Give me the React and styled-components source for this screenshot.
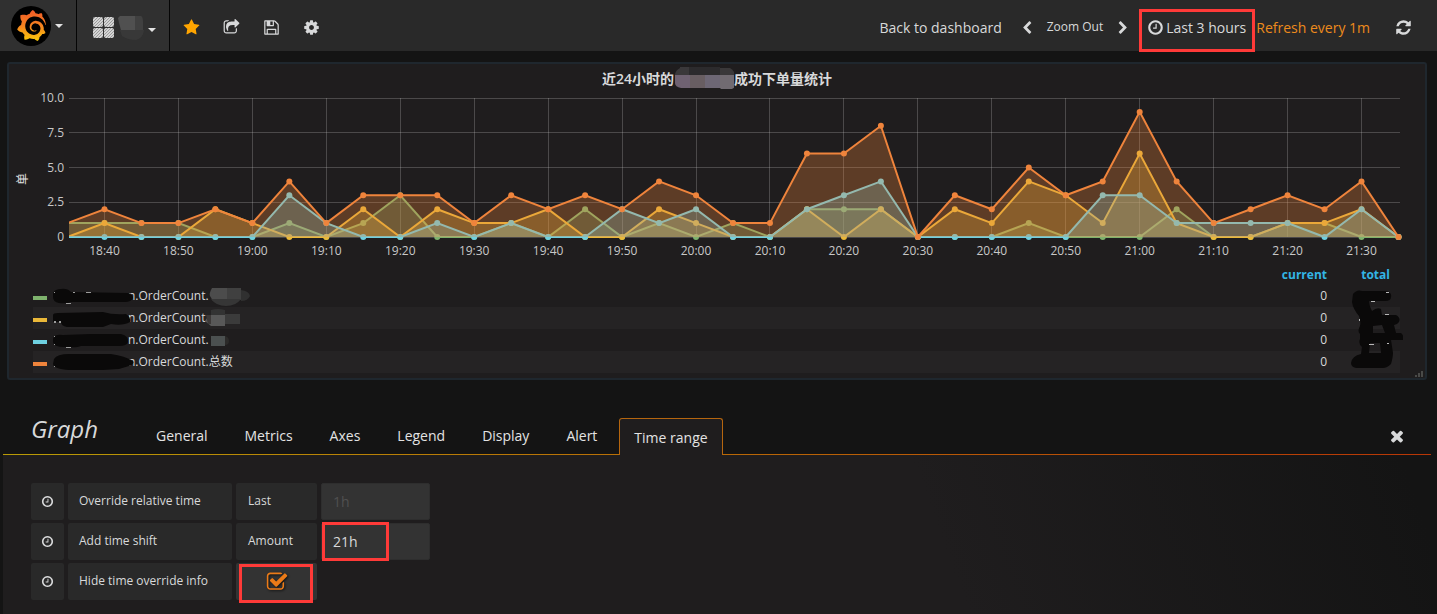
import React, { useLayoutEffect, useRef, useState } from "react";
import styled, { createGlobalStyle, css } from "styled-components";
import { SiGrafana } from "react-icons/si";

const GlobalStyle = createGlobalStyle`
  * { box-sizing: border-box; }
  body {
    margin: 0;
    background: #141414;
    color: #d8d9da;
    font-family: "Open Sans", "Noto Sans CJK SC", sans-serif;
    font-size: 14px;
    line-height: 20px;
  }
  button, input { font: inherit; color: inherit; }
  button { background: none; border: 0; padding: 0; cursor: pointer; }
  a { color: inherit; text-decoration: none; }
`;

const ICONS = {
  star: "M1728 647q0 22-26 48l-363 354 86 500q1 7 1 20 0 21-10.500 35.500t-30.500 14.500q-19 0-40-12l-449-236-449 236q-22 12-40 12-21 0-31.500-14.500t-10.500-35.500q0-6 2-20l86-500-364-354q-25-27-25-48 0-37 56-46l502-73 225-455q19-41 49-41t49 41l225 455 502 73q56 9 56 46z",
  share: "M1472 989v259q0 119-84.500 203.500t-203.500 84.500h-832q-119 0-203.500-84.500t-84.500-203.500v-832q0-119 84.500-203.500t203.500-84.500h255q13 0 22.500 9.500t9.500 22.500q0 27-26 32-77 26-133 60-10 4-16 4h-112q-66 0-113 47t-47 113v832q0 66 47 113t113 47h832q66 0 113-47t47-113v-214q0-19 18-29 28-13 54-37 16-16 35-8 21 9 21 29zm237-496l-384 384q-18 19-45 19-12 0-25-5-39-17-39-59v-192h-160q-323 0-438 131-119 137-74 473 3 23-20 34-8 2-12 2-16 0-26-13-10-14-21-31t-39.500-68.500-49.500-99.500-38.500-114-17.500-122q0-49 3.500-91t14-90 28-88 47-81.500 68.500-74 94.500-61.500 124.500-48.500 159.500-30.500 196.500-11h160v-192q0-42 39-59 13-5 25-5 26 0 45 19l384 384q19 19 19 45t-19 45z",
  save: "M512 1536h768v-384h-768v384zm896 0h128v-896q0-14-10-38.500t-20-34.500l-281-281q-10-10-34-20t-39-10v416q0 40-28 68t-68 28h-576q-40 0-68-28t-28-68v-416h-128v1280h128v-416q0-40 28-68t68-28h832q40 0 68 28t28 68v416zm-384-928v-320q0-13-9.500-22.500t-22.500-9.500h-192q-13 0-22.500 9.500t-9.500 22.500v320q0 13 9.500 22.500t22.500 9.500h192q13 0 22.500-9.500t9.500-22.500zm640 32v928q0 40-28 68t-68 28h-1344q-40 0-68-28t-28-68v-1344q0-40 28-68t68-28h928q40 0 88 20t76 48l280 280q28 28 48 76t20 88z",
  cog: "M1152 896q0-106-75-181t-181-75-181 75-75 181 75 181 181 75 181-75 75-181zm512-109v222q0 12-8 23t-20 13l-185 28q-19 54-39 91 35 50 107 138 10 12 10 25t-9 23q-27 37-99 108t-94 71q-12 0-26-9l-138-108q-44 23-91 38-16 136-29 186-7 28-36 28h-222q-14 0-24.500-8.500t-11.500-21.500l-28-184q-49-16-90-37l-141 107q-10 9-25 9-14 0-25-11-126-114-165-168-7-10-7-23 0-12 8-23 15-21 51-66.500t54-70.500q-27-50-41-99l-183-27q-13-2-21-12.500t-8-23.500v-222q0-12 8-23t19-13l186-28q14-46 39-92-40-57-107-138-10-12-10-24 0-10 9-23 26-36 98.500-107.500t94.500-71.500q13 0 26 10l138 107q44-23 91-38 16-136 29-186 7-28 36-28h222q14 0 24.500 8.500t11.500 21.500l28 184q49 16 90 37l142-107q9-9 24-9 13 0 25 10 129 119 165 170 7 8 7 22 0 12-8 23-15 21-51 66.500t-54 70.500q26 50 41 98l183 28q13 2 21 12.500t8 23.500z",
  left: "M1427 301l-531 531 531 531q19 19 19 45t-19 45l-166 166q-19 19-45 19t-45-19l-742-742q-19-19-19-45t19-45l742-742q19-19 45-19t45 19l166 166q19 19 19 45t-19 45z",
  right: "M1363 877l-742 742q-19 19-45 19t-45-19l-166-166q-19-19-19-45t19-45l531-531-531-531q-19-19-19-45t19-45l166-166q19-19 45-19t45 19l742 742q19 19 19 45t-19 45z",
  clock: "M1024 544v448q0 14-9 23t-23 9h-320q-14 0-23-9t-9-23v-64q0-14 9-23t23-9h224v-352q0-14 9-23t23-9h64q14 0 23 9t9 23zm416 352q0-148-73-273t-198-198-273-73-273 73-198 198-73 273 73 273 198 198 273 73 273-73 198-198 73-273zm224 0q0 209-103 385.500t-279.500 279.500-385.500 103-385.500-103-279.500-279.500-103-385.500 103-385.500 279.500-279.500 385.500-103 385.500 103 279.500 279.500 103 385.500z",
  refresh: "M1639 1056q0 5-1 7-64 268-268 434.500t-478 166.500q-146 0-282.500-55t-243.500-157l-129 129q-19 19-45 19t-45-19-19-45v-448q0-26 19-45t45-19h448q26 0 45 19t19 45-19 45l-137 137q71 66 161 102t187 36q134 0 250-65t186-179q11-17 53-117 8-23 30-23h192q13 0 22.500 9.500t9.500 22.500zm25-800v448q0 26-19 45t-45 19h-448q-26 0-45-19t-19-45 19-45l138-138q-148-137-349-137-134 0-250 65t-186 179q-11 17-53 117-8 23-30 23h-199q-13 0-22.500-9.500t-9.500-22.500v-7q65-268 270-434.500t480-166.500q146 0 284 55.500t245 156.500l130-129q19-19 45-19t45 19 19 45z",
  times: "M1490 1322q0 40-28 68l-136 136q-28 28-68 28t-68-28l-294-294-294 294q-28 28-68 28t-68-28l-136-136q-28-28-28-68t28-68l294-294-294-294q-28-28-28-68t28-68l136-136q28-28 68-28t68 28l294 294 294-294q28-28 68-28t68 28l136 136q28 28 28 68t-28 68l-294 294 294 294q28 28 28 68z",
  check: "M1472 930v318q0 119-84.500 203.500t-203.500 84.500h-832q-119 0-203.500-84.500t-84.500-203.500v-832q0-119 84.500-203.500t203.500-84.500h832q63 0 117 25 15 7 18 23 3 17-9 29l-49 49q-10 10-23 10-3 0-9-2-23-6-45-6h-832q-66 0-113 47t-47 113v832q0 66 47 113t113 47h832q66 0 113-47t47-113v-254q0-13 9-22l64-64q10-10 23-10 6 0 12 3 20 8 20 29zm231-489l-814 814q-24 24-57 24t-57-24l-430-430q-24-24-24-57t24-57l110-110q24-24 57-24t57 24l263 263 647-647q24-24 57-24t57 24l110 110q24 24 24 57t-24 57z",
};

const IconSvg = styled.svg`
  display: block;
  flex: none;
  fill: currentColor;
`;

const Icon = ({ name, size = 16 }) => (
  <IconSvg width={size} height={size} viewBox="0 0 1792 1792" aria-hidden="true">
    <path d={ICONS[name]} />
  </IconSvg>
);

/* ---------- top bar ---------- */

const Navbar = styled.header`
  display: flex;
  height: 51px;
  background: #292929;
`;

const NavSection = styled.button`
  position: relative;
  display: flex;
  align-items: center;
  gap: 4px;
  width: ${(p) => p.$width}px;
  padding-left: ${(p) => p.$inset}px;
  background: #303030;
  border-right: 1px solid #050505;
`;

const LogoDisc = styled.span`
  display: grid;
  place-items: center;
  width: 40px;
  height: 40px;
  border-radius: 50%;
  background: #000;
  svg { fill: url(#flame); }
`;

const Defs = styled.svg`
  position: absolute;
`;

const Caret = styled.span`
  border: 4px solid transparent;
  border-top-color: #e3e3e3;
  border-bottom: 0;
  ${(p) => p.$low && css`margin-top: 8px;`}
`;

const NavActions = styled.nav`
  display: flex;
  align-items: center;
  gap: 23px;
  padding: 3px 0 0 13px;
`;

const NavIcon = styled.button`
  color: ${(p) => (p.$starred ? "#ffa500" : "#d8d9da")};
`;

const TimeControls = styled.div`
  display: flex;
  align-items: center;
  margin-left: auto;
  padding: 4px 25px 0 0;
`;

const NavLink = styled.a`
  margin-right: 18px;
`;

const ZoomButton = styled.button`
  margin: 0 13px 2px;
  font-size: 12px;
`;

const TimePicker = styled.button`
  position: relative;
  display: flex;
  align-items: center;
  gap: 2px;
  margin: 0 10px 0 17px;
`;

const RefreshRate = styled.button`
  margin-right: 25px;
  color: #ed8b1c;
`;

const Callout = styled.span`
  position: absolute;
  inset: ${(p) => p.$inset};
  border: 3px solid #ff3a38;
  pointer-events: none;
`;

/* ---------- panel ---------- */

const Panel = styled.section`
  position: relative;
  margin: 11px 10px 0 7px;
  padding-bottom: 5px;
  border: 2px solid #1f272e;
  border-radius: 3px;
  background: #1f1d1e;
`;

const PanelTitle = styled.h2`
  display: flex;
  justify-content: center;
  margin: 0;
  height: 28px;
  padding-top: 5px;
  font-size: 14px;
  font-weight: 600;
  svg { margin: -2px 0 0 1px; }
`;

const ChartBox = styled.div`
  height: 172px;
  svg { display: block; overflow: visible; }
`;

const LegendTable = styled.table`
  width: calc(100% - 49px);
  margin-left: 24px;
  border-collapse: collapse;
  font-size: 12px;
  line-height: 22px;
  th, td { padding: 0; height: 22px; text-align: right; }
  thead th, thead td { height: 21px; line-height: 21px; color: #33b5e5; font-weight: 700; }
  tbody tr:nth-child(even) { background: #252324; }
  th:last-child, td:last-child { width: 73px; padding-right: 10px; }
`;

const SeriesCell = styled.td`
  && { text-align: left; }
`;

const SeriesName = styled.div`
  display: flex;
  align-items: center;
  height: 22px;
`;

const Swatch = styled.span`
  width: 14px;
  height: 4px;
  margin: 3px 6px 0 0;
  background: ${(p) => p.$color};
`;

const ScribbleOver = styled.span`
  position: relative;
  z-index: 1;
  height: 22px;
`;

const MaskedTotal = styled.div`
  position: absolute;
  right: 22px;
  bottom: 9px;
  svg { display: block; }
`;

const ResizeHandle = styled.svg`
  position: absolute;
  right: 1px;
  bottom: 1px;
`;

const SERIES = [
  { color: "#7EB26D", values: [1,1,1,1,0,0,1,0,1,3,0,0,1,0,2,0,1,0,1,0,2,2,2,0,0,0,1,0,0,0,2,0,0,1,1,0,0] },
  { color: "#EAB839", values: [0,1,0,0,2,1,0,0,2,0,2,1,1,2,0,0,2,1,0,0,2,0,2,0,2,1,4,3,1,6,1,0,0,1,1,2,0] },
  { color: "#6ED0E0", values: [0,0,0,0,0,0,3,1,0,0,1,0,1,0,0,2,1,2,0,0,2,3,4,0,0,0,0,0,3,3,1,1,1,1,0,2,0] },
  { color: "#EF843C", values: [1,2,1,1,2,1,4,1,3,3,3,1,3,2,3,2,4,3,1,1,6,6,8,0,3,2,5,3,4,9,4,1,2,3,2,4,0] },
];

const Y_TICKS = [["10.0", 10], ["7.5", 7.5], ["5.0", 5], ["2.5", 2.5], ["0", 0]];

const timeLabel = (i) => {
  const minutes = 18 * 60 + 35 + i * 5;
  return `${Math.floor(minutes / 60)}:${String(minutes % 60).padStart(2, "0")}`;
};

function Chart() {
  const box = useRef(null);
  const [width, setWidth] = useState(1200);

  useLayoutEffect(() => {
    const measure = () => setWidth(box.current.clientWidth);
    measure();
    const observer = new ResizeObserver(measure);
    observer.observe(box.current);
    return () => observer.disconnect();
  }, []);

  const left = 60;
  const right = width - 25;
  const top = 6;
  const bottom = 145;
  const x = (i) => left - 1.5 + (i * (right - left)) / 36;
  const y = (v) => bottom - (v * (bottom - top)) / 10;

  return (
    <ChartBox ref={box}>
      <svg width={width} height="172" fontSize="12" fill="#c8c8c8">
        <clipPath id="plot">
          <rect x={left} y="0" width={right - left + 6} height="160" />
        </clipPath>
        <g stroke="rgba(200,200,200,.26)">
          {Y_TICKS.map(([label, v]) => (
            <line key={label} x1={left} x2={right} y1={Math.floor(y(v)) + 0.5} y2={Math.floor(y(v)) + 0.5} />
          ))}
          {SERIES[0].values.map((_, i) =>
            i % 2 ? <line key={i} x1={Math.floor(x(i)) + 0.5} x2={Math.floor(x(i)) + 0.5} y1={top} y2={bottom} /> : null
          )}
        </g>
        {Y_TICKS.map(([label, v]) => (
          <text key={label} x={left - 5} y={y(v) + 4} textAnchor="end">{label}</text>
        ))}
        {SERIES[0].values.map((_, i) =>
          i % 2 ? <text key={i} x={x(i)} y="163" textAnchor="middle">{timeLabel(i)}</text> : null
        )}
        <text transform="translate(18 87) rotate(-90)" textAnchor="middle" fill="#e2e2e2">单</text>
        {SERIES.map(({ color, values }) => {
          const line = values.map((v, i) => `${x(i)},${y(v)}`).join(" ");
          return (
            <g key={color} clipPath="url(#plot)">
              <polygon points={`${x(0)},${bottom} ${line} ${x(36)},${bottom}`} fill={color} fillOpacity=".3" />
              <polyline points={line} fill="none" stroke={color} strokeWidth="2" />
              {values.map((v, i) => (i ? <circle key={i} cx={x(i)} cy={y(v)} r="3" fill={color} /> : null))}
            </g>
          );
        })}
      </svg>
    </ChartBox>
  );
}

const TitleMask = () => (
  <svg width="59" height="24" aria-hidden="true">
    <path d="M5 0H14V9H0V7Q1 3 5 1z" fill="#3a383a" />
    <path d="M14 0h31v9H14z" fill="#2c2b2d" />
    <path d="M45 1h10q4 2 5 7H45z" fill="#3a3839" />
    <path d="M0 8h15v13H6Q0 20 0 16z" fill="#6f6272" />
    <path d="M15 8h15v13H15z" fill="#685e62" />
    <path d="M30 8h15v13H30z" fill="#6d6775" />
    <path d="M45 8h15v12l-3 2H46l-1-1z" fill="#716b71" />
  </svg>
);

const LEGEND = [
  {
    color: "#7EB26D",
    scribble: "M0 8Q2 4 8 4Q14 3 18 7L75 8Q80 9 80 13Q78 17 72 17H18Q14 19 6 18Q0 17 0 12z",
    specks: "M1 7h1v1h-1zM20 7h2v1h-2zM33 7h5v1h-5zM13 18h5v1h-5z",
    mosaic: [["M3 3Q0 8 1 11L4 16H18V3z", "#4c4c4c"], ["M18 3h14v12H18z", "#404040"], ["M32 5q8 1 9 6q-2 5-9 5z", "#303030"], ["M2 14h30q-5 7-15 7T2 14z", "#363636"]],
  },
  {
    color: "#EAB839",
    scribble: "M0 8Q0 6 5 6L50 5Q60 8 73 7Q78 10 77 15Q70 19 58 17L50 20H14Q8 19 8 15H0z",
    specks: "M1 14h2v2h-2zM6 14h2v2h-2z",
    mosaic: [["M2 3q7-2 14 0v6H2z", "#333"], ["M0 8h16v11H2L-4 14z", "#585858"], ["M16 7h15v10H16z", "#3b3b3b"], ["M-3 8h5v9h-3z", "#3d3938"]],
  },
  {
    color: "#6ED0E0",
    scribble: "M0 10Q1 5 10 6L38 5H68Q76 7 75 13Q74 17 66 17H28Q24 19 12 18Q0 18 0 13z",
    specks: "M1 7h1v1h-1zM1 15h1v1h-1zM13 18h5v1h-5z",
    mosaic: [["M2 7h14v10H2z", "#4b5050"], ["M16 7q4 1 4 5t-4 4z", "#2b2a29"]],
  },
  {
    color: "#EF843C",
    scribble: "M1 8Q4 3 16 3H58Q72 5 80 10Q82 13 76 15L66 18L50 19H16Q1 18 0 13z",
    specks: "M1 15h1v1h-1z",
    suffix: "总数",
  },
];

const Scribble = ({ d, specks }) => (
  <svg width="75" height="22" overflow="visible" aria-hidden="true">
    <path d={d} fill="#0a0909" />
    <path d={specks} fill="#9c9c9c" />
  </svg>
);

/* ---------- editor ---------- */

const Editor = styled.section`
  margin: 33px 6px 0 3px;
`;

const TabBar = styled.div`
  display: flex;
  align-items: flex-end;
  padding: 0 25px 0 28px;
  border-bottom: 1px solid #b8700a;
  border-image: linear-gradient(to right, #b89b06, #b83606) 1;
`;

const EditorTitle = styled.h1`
  width: 110px;
  margin: 0 0 9px;
  font-size: 24px;
  line-height: 32px;
  font-weight: 400;
  font-style: italic;
`;

const Tab = styled.button`
  height: 37px;
  margin: 0 7px -1px 0;
  padding: 0 14px 2px;
  border: 1px solid transparent;
  border-bottom: 0;
  color: #e3e3e3;
  ${(p) => p.$active && css`
    padding: 2px 14px 0;
    border-color: #b5660f;
    border-radius: 3px 3px 0 0;
    background: #1f1d1e;
  `}
`;

const CloseButton = styled.button`
  margin: 0 0 9px auto;
`;

const EditorBody = styled.form`
  display: flex;
  flex-direction: column;
  gap: 3px;
  padding: 28px 28px 14px;
  background: linear-gradient(70deg, #1f1d1e 0%, #1f1d1e 65%, #141414 98%);
`;

const Field = styled.div`
  display: flex;
  gap: 4px;
  height: 37px;
  font-size: 12px;
`;

const FieldIcon = styled.span`
  display: grid;
  place-items: center;
  width: 33px;
  border-radius: 2px;
  background: #292929;
`;

const FieldLabel = styled.label`
  display: flex;
  align-items: center;
  width: ${(p) => p.$width}px;
  padding: 0 11px 2px;
  border-radius: 2px;
  background: #292929;
`;

const FieldUnit = styled.span`
  display: flex;
  align-items: center;
  width: 81px;
  padding: 0 12px 2px;
  border-radius: 2px;
  background: #292929;
`;

const InputBox = styled.span`
  position: relative;
  width: 109px;
`;

const TextInput = styled.input`
  width: 100%;
  height: 37px;
  padding: 0 11px;
  border: 1px solid #2e2e2e;
  border-radius: 2px;
  background: #333;
  font-size: 14px;
  &::placeholder { color: #505050; opacity: 1; }
`;

const CheckCell = styled.label`
  position: relative;
  display: grid;
  place-items: center;
  width: 81px;
  border-radius: 2px;
  background: #333;
  color: #eb7b18;
  svg { filter: drop-shadow(1px 1px 1px #111); }
`;

const HiddenCheck = styled.input`
  position: absolute;
  opacity: 0;
`;

const TABS = ["General", "Metrics", "Axes", "Legend", "Display", "Alert", "Time range"];

export default function App() {
  return (
    <>
      <GlobalStyle />
      <Navbar>
        <NavSection $width={77} $inset={11} aria-label="Main menu">
          <Defs width="0" height="0" aria-hidden="true">
            <linearGradient id="flame" x1="0" y1="0" x2="0" y2="1">
              <stop offset="0" stopColor="#f05a28" />
              <stop offset=".5" stopColor="#f58220" />
              <stop offset="1" stopColor="#fbca0a" />
            </linearGradient>
          </Defs>
          <LogoDisc>
            <SiGrafana size={31} />
          </LogoDisc>
          <Caret />
        </NavSection>
        <NavSection $width={93} $inset={16} aria-label="Dashboards">
          <svg width="51" height="28" viewBox="0 -1 51 28" aria-hidden="true">
            <defs>
              <pattern id="hatch" width="3" height="3" patternUnits="userSpaceOnUse">
                <rect width="3" height="3" fill="#d4d4d4" />
                <path d="M0 3L3 0" stroke="#9a9a9a" strokeWidth="1" />
              </pattern>
            </defs>
            <g fill="url(#hatch)">
              <rect x="0" y="4" width="10" height="10" rx="2" />
              <rect x="11" y="4" width="10" height="10" rx="2" />
              <rect x="0" y="15" width="10" height="10" rx="2" />
              <rect x="11" y="15" width="10" height="10" rx="2" />
            </g>
            <path d="M27 3h15v14H28l-2-7-1-5z" fill="#505050" />
            <path d="M42 3h6q2 1 2 6v8h-8z" fill="#404040" />
            <path d="M27 17h24q-1 8-8 10-8 0-14-4z" fill="#383838" />
          </svg>
          <Caret $low />
        </NavSection>
        <NavActions>
          <NavIcon $starred aria-label="Star"><Icon name="star" size={17} /></NavIcon>
          <NavIcon aria-label="Share"><Icon name="share" size={17} /></NavIcon>
          <NavIcon aria-label="Save"><Icon name="save" size={17} /></NavIcon>
          <NavIcon aria-label="Settings"><Icon name="cog" size={17} /></NavIcon>
        </NavActions>
        <TimeControls>
          <NavLink href="#dashboard">Back to dashboard</NavLink>
          <NavIcon aria-label="Earlier"><Icon name="left" size={14} /></NavIcon>
          <ZoomButton>Zoom Out</ZoomButton>
          <NavIcon aria-label="Later"><Icon name="right" size={14} /></NavIcon>
          <TimePicker>
            <Icon name="clock" size={17} />
            Last 3 hours
            <Callout $inset="-9px -9px -14px -8px" />
          </TimePicker>
          <RefreshRate>Refresh every 1m</RefreshRate>
          <NavIcon aria-label="Refresh"><Icon name="refresh" size={17} /></NavIcon>
        </TimeControls>
      </Navbar>

      <Panel>
        <PanelTitle>
          <span>近24小时的</span>
          <TitleMask />
          <span>成功下单量统计</span>
        </PanelTitle>
        <Chart />
        <LegendTable>
          <thead>
            <tr><td /><th>current</th><th>total</th></tr>
          </thead>
          <tbody>
            {LEGEND.map(({ color, scribble, specks, mosaic, suffix }) => (
              <tr key={color}>
                <SeriesCell>
                  <SeriesName>
                    <Swatch $color={color} />
                    <ScribbleOver><Scribble d={scribble} specks={specks} /></ScribbleOver>
                    <span>n.OrderCount.{suffix}</span>
                    {mosaic && (
                      <svg width="44" height="22" overflow="visible" aria-hidden="true">
                        {mosaic.map(([d, fill]) => <path key={d} d={d} fill={fill} />)}
                      </svg>
                    )}
                  </SeriesName>
                </SeriesCell>
                <td>0</td>
                <td />
              </tr>
            ))}
          </tbody>
        </LegendTable>
        <MaskedTotal>
          <svg width="52" height="80" aria-hidden="true">
            <path
              fillRule="evenodd"
              d="M2 5Q6 0 11 2H36Q41 4 40 8Q40 12 34 12H18Q18 16 21 22Q26 18 30 20L31 26H45Q50 29 48 33Q46 36 43 36L45 44H50Q53 46 52 51H40L42 64Q42 68 40 75Q36 79 32 79H5Q0 78 0 74Q1 67 10 65L11 58Q7 55 9 50V45Q6 42 9 37Q10 32 8 27Q2 20 1 13zM22 37V44H34L31 36zM19 54L18 64H30L29 54z"
              fill="#0a0909"
            />
            <path d="M35 3h3v1h-3zM20 12h4v1h-4zM34 25h4v1h-4zM8 30h1v2h-1zM18 55h5v1h-5zM36 54h2v1h-2z" fill="#b8b8b8" />
          </svg>
        </MaskedTotal>
        <ResizeHandle width="9" height="6" fill="#4a4a48" aria-hidden="true">
          <path d="M0 4h2v2H0zM3 2h2v4H3zM6 0h2v6H6z" />
        </ResizeHandle>
      </Panel>

      <Editor>
        <TabBar>
          <EditorTitle>Graph</EditorTitle>
          {TABS.map((tab) => (
            <Tab key={tab} type="button" $active={tab === "Time range"}>{tab}</Tab>
          ))}
          <CloseButton aria-label="Close"><Icon name="times" size={18} /></CloseButton>
        </TabBar>
        <EditorBody>
          <Field>
            <FieldIcon><Icon name="clock" size={13} /></FieldIcon>
            <FieldLabel $width={164} htmlFor="relative">Override relative time</FieldLabel>
            <FieldUnit>Last</FieldUnit>
            <InputBox><TextInput id="relative" placeholder="1h" /></InputBox>
          </Field>
          <Field>
            <FieldIcon><Icon name="clock" size={13} /></FieldIcon>
            <FieldLabel $width={164} htmlFor="shift">Add time shift</FieldLabel>
            <FieldUnit>Amount</FieldUnit>
            <InputBox>
              <TextInput id="shift" defaultValue="21h" />
              <Callout $inset="-1px 41px -1px 1px" />
            </InputBox>
          </Field>
          <Field>
            <FieldIcon><Icon name="clock" size={13} /></FieldIcon>
            <FieldLabel $width={164} htmlFor="hide">Hide time override info</FieldLabel>
            <CheckCell>
              <HiddenCheck id="hide" type="checkbox" defaultChecked />
              <Icon name="check" size={22} />
              <Callout $inset="1px 4px -3px 3px" />
            </CheckCell>
          </Field>
        </EditorBody>
      </Editor>
    </>
  );
}
